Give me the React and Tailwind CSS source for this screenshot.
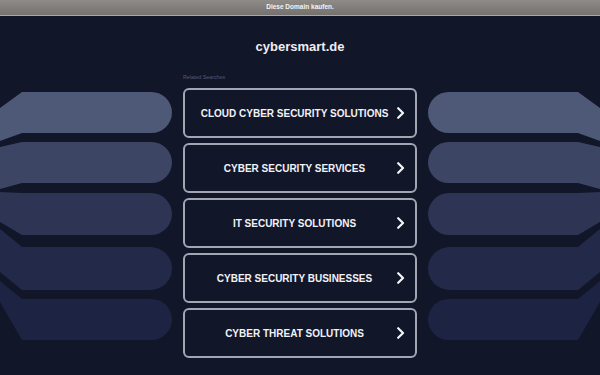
const searches = [
  "CLOUD CYBER SECURITY SOLUTIONS",
  "CYBER SECURITY SERVICES",
  "IT SECURITY SOLUTIONS",
  "CYBER SECURITY BUSINESSES",
  "CYBER THREAT SOLUTIONS",
];

// slat rows: flat top/bottom, and where the outer slanted edge meets x=0
const slats = [
  { top: 92, bottom: 133, top0: 108, bottom0: 141, color: "#4e5877" },
  { top: 142, bottom: 183, top0: 147, bottom0: 189, color: "#3d4565" },
  { top: 193, bottom: 235, top0: 192, bottom0: 222, color: "#2d3454" },
  { top: 247, bottom: 290, top0: 229, bottom0: 272, color: "#232a49" },
  { top: 299, bottom: 340, top0: 281, bottom0: 302, color: "#1d2342" },
];

function Slats({ flip }) {
  return (
    <svg
      className={flip ? "-scale-x-100" : ""}
      width="183"
      height="359"
      viewBox="0 16 183 359"
    >
      {slats.map((s) => {
        const r = (s.bottom - s.top) / 2;
        const x = 172 - r;
        return (
          <path
            key={s.top}
            fill={s.color}
            d={`M0 ${s.top0} L22 ${s.top} L${x} ${s.top} A${r} ${r} 0 0 1 ${x} ${s.bottom} L22 ${s.bottom} L0 ${s.bottom0} Z`}
          />
        );
      })}
    </svg>
  );
}

function Chevron() {
  return (
    <svg width="10" height="12" viewBox="0 0 10 12" className="shrink-0">
      <polyline
        points="2.2,1.2 7,6 2.2,10.8"
        fill="none"
        stroke="#f3f4f7"
        strokeWidth="2.2"
        strokeLinecap="round"
        strokeLinejoin="round"
      />
    </svg>
  );
}

export default function App() {
  return (
    <div className="h-[375px] w-[600px] overflow-hidden bg-[#121629] font-['Liberation_Sans',Arial,sans-serif]">
      <div className="flex h-[16px] items-center justify-center border-b border-[#a9a7ab] bg-gradient-to-b from-[#8f8c88] to-[#74716e]">
        <span className="text-[6.5px] font-bold leading-none text-[#f4f4f4]">
          Diese Domain kaufen.
        </span>
      </div>

      <div className="flex">
        <Slats />

        <div className="flex w-[234px] flex-col">
          <h1 className="pt-[23px] text-center text-[13px] font-bold leading-[16px] text-[#eceef3]">
            cybersmart.de
          </h1>
          <p className="mt-[18px] text-[5.3px] leading-[8px] text-[#575c73]">
            Related Searches
          </p>
          <div className="mt-[7px] flex flex-col gap-[5px]">
            {searches.map((label) => (
              <a
                key={label}
                href="#"
                className="flex h-[50px] items-center gap-[6px] rounded-[6px] border-2 border-[#a3a5b3] pl-[14px] pr-[9px]"
              >
                <span className="flex-1 text-center text-[10px] font-bold text-[#f1f2f6]">
                  {label}
                </span>
                <Chevron />
              </a>
            ))}
          </div>
        </div>

        <Slats flip />
      </div>
    </div>
  );
}
